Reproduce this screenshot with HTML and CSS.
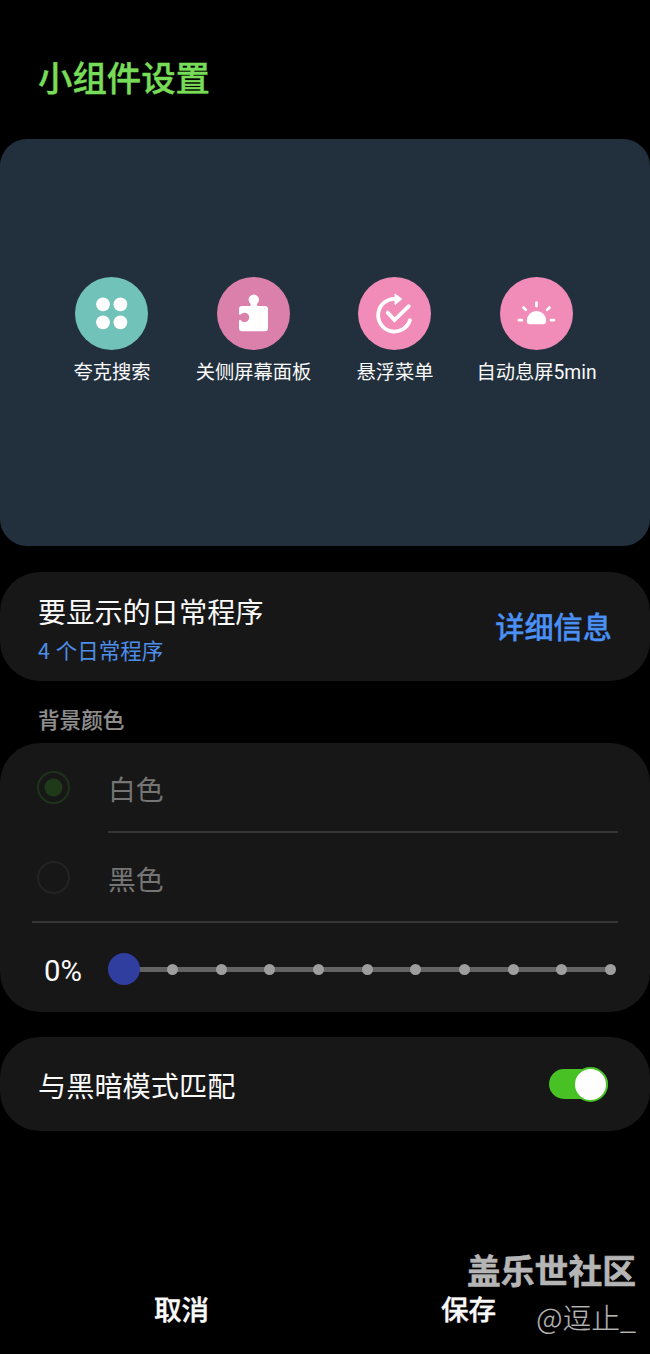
FILE: index.html
```html
<!DOCTYPE html>
<html lang="zh-CN">
<head>
<meta charset="UTF-8">
<meta name="viewport" content="width=device-width, initial-scale=1.0">
<title>小组件设置</title>
<link rel="stylesheet" href="styles.css">
</head>
<body>
<div class="screen">
  <h1>小组件设置</h1>

  <div class="preview">
    <div class="routine">
      <svg class="icon teal" viewBox="0 0 73 73">
        <circle cx="28" cy="27.3" r="6.9"/>
        <circle cx="45.4" cy="27.3" r="6.9"/>
        <circle cx="28" cy="45.3" r="6.9"/>
        <circle cx="45.4" cy="45.3" r="6.9"/>
      </svg>
      <span>夸克搜索</span>
    </div>
    <div class="routine">
      <svg class="icon rose" viewBox="0 0 73 73">
        <path d="M25 29h6.500c1.800 0 2.600-.6 2.100-2.100a5.200 5.200 0 1 1 6.400 0c-.5 1.500.3 2.100 2.100 2.100H48a3 3 0 0 1 3 3v19.300a3 3 0 0 1-3 3H25a3 3 0 0 1-3-3v-7c0-1.300.9-1.500 2-.8a4.700 4.700 0 1 0 0-6.200c-1.100.8-2 .4-2-.8V32a3 3 0 0 1 3-3z"/>
      </svg>
      <span>关侧屏幕面板</span>
    </div>
    <div class="routine">
      <svg class="icon pink" viewBox="0 0 73 73">
        <path class="line" d="M38 22A16.300 16.300 0 1 0 52 43.200M29.700 35.600l6.800 7.400L50.800 29.200"/>
        <path d="M37 17l6.700 5-6.700 5.500z" stroke="#fff" stroke-linejoin="round"/>
      </svg>
      <span>悬浮菜单</span>
    </div>
    <div class="routine">
      <svg class="icon pink" viewBox="0 0 73 73">
        <path d="M26.800 43.700a9.700 9.700 0 0 1 19.400 0c0 2.400-1 3.600-3.200 3.600H30c-2.200 0-3.200-1.200-3.200-3.600z"/>
        <path class="ray" d="M36.500 25.500v3.600M23.500 30.500l2.400 2.400M49.500 30.500l-2.400 2.400M18.900 43.200h3M51 43.200h3"/>
      </svg>
      <span>自动息屏5min</span>
    </div>
  </div>

  <div class="card routines">
    <div>
      <div class="title">要显示的日常程序</div>
      <div class="count">4 个日常程序</div>
    </div>
    <a class="details">详细信息</a>
  </div>

  <h2>背景颜色</h2>

  <div class="card colors">
    <div class="option">
      <span class="radio checked"></span>
      <span class="name">白色</span>
    </div>
    <div class="option last">
      <span class="radio"></span>
      <span class="name">黑色</span>
    </div>
    <div class="opacity">
      <span class="percent">0%</span>
      <div class="slider">
        <span class="knob"></span>
        <i></i><i></i><i></i><i></i><i></i><i></i><i></i><i></i><i></i><i></i>
      </div>
    </div>
  </div>

  <div class="card dark-mode">
    <span class="title">与黑暗模式匹配</span>
    <span class="switch"><span class="thumb"></span></span>
  </div>

  <div class="buttons">
    <span>取消</span>
    <span>保存</span>
  </div>

  <div class="watermark">
    <div class="community">盖乐世社区</div>
    <div class="user">@逗止_</div>
  </div>
</div>
</body>
</html>
```

FILE: styles.css
```css
* {
    box-sizing: border-box;
}

body {
    margin: 0;
    background-color: #000;
    color: #fafafa;
    font-family: Roboto, "Noto Sans CJK SC", sans-serif;
}

.screen {
    position: relative;
    width: 650px;
    height: 1354px;
    overflow: hidden;
}

h1 {
    margin: 0;
    height: 139px;
    padding: 54px 38px 0;
    font-size: 34.400px;
    font-weight: 500;
    line-height: 50px;
    color: #77dc58;
    -webkit-text-stroke: 0.4px;
}

.preview {
    display: grid;
    grid-template-columns: repeat(4, 141.500px);
    justify-content: center;
    height: 407px;
    padding-top: 138px;
    padding-right: 2.500px;
    border-radius: 27px;
    background-color: #22303d;
}

.routine {
    display: flex;
    flex-direction: column;
    align-items: center;
    font-size: 19.300px;
    line-height: 28px;
    white-space: nowrap;
}

.routine span {
    margin-top: 9px;
    padding-left: 1px;
}

.icon {
    width: 73px;
    height: 73px;
    border-radius: 50%;
    fill: #fff;
}

.teal {
    background-color: #71c2b8;
}

.rose {
    background-color: #da80ab;
}

.pink {
    background-color: #f18bb8;
}

.line {
    fill: none;
    stroke: #fff;
    stroke-width: 3.800;
    stroke-linecap: round;
}

.ray {
    fill: none;
    stroke: #fff;
    stroke-width: 2.700;
    stroke-linecap: round;
}

.card {
    border-radius: 40px;
    background-color: #171717;
}

.title {
    font-size: 28.200px;
    line-height: 40px;
}

.routines {
    display: flex;
    justify-content: space-between;
    height: 109px;
    margin-top: 26px;
    padding: 22px 38px 0;
}

.count {
    font-family: "Noto Sans CJK SC", sans-serif;
    font-size: 21.500px;
    line-height: 31px;
    word-spacing: 1px;
    color: #4d8ee8;
}

.details {
    font-size: 29.200px;
    font-weight: 500;
    line-height: 68px;
    color: #4a90f5;
    -webkit-text-stroke: 0.3px;
}

h2 {
    margin: 0;
    height: 62px;
    padding: 25px 38px 0;
    font-size: 21.600px;
    font-weight: 500;
    line-height: 30px;
    color: #8e8e8e;
    -webkit-text-stroke: 0.2px;
}

.colors {
    height: 269px;
    padding: 0 32px;
}

.option {
    display: grid;
    grid-template-columns: 76px 1fr;
    height: 90px;
}

.option .name {
    padding-top: 7px;
    border-bottom: 2px solid #363636;
    font-size: 27.800px;
    line-height: 81px;
    color: #757575;
}

.last {
    border-bottom: 2px solid #363636;
}

.last .name {
    border: none;
}

.radio {
    width: 33px;
    height: 33px;
    margin: 28px 0 0 5px;
    border: 2px solid #232323;
    border-radius: 50%;
}

.checked {
    border-color: #1e331b;
    background: radial-gradient(circle, #1e3a18 8.500px, transparent 9.300px);
}

.opacity {
    display: flex;
    align-items: center;
    height: 92px;
}

.percent {
    width: 76px;
    padding: 3px 0 0 12px;
    font-size: 29.300px;
}

.slider {
    display: flex;
    align-items: center;
    justify-content: space-between;
    width: 508px;
    height: 32px;
    background: linear-gradient(#636363, #636363) 16px 50% / 486px 5px no-repeat;
}

.slider i {
    width: 11px;
    height: 11px;
    border-radius: 50%;
    background-color: #9e9e9e;
}

.knob {
    width: 32px;
    height: 32px;
    margin-right: -10.500px;
    border-radius: 50%;
    background-color: #303f9f;
}

.dark-mode {
    display: flex;
    align-items: center;
    justify-content: space-between;
    height: 94px;
    margin-top: 25px;
    padding: 0 42px 0 38px;
}

.dark-mode .title {
    padding-top: 8px;
}

.switch {
    display: flex;
    align-items: center;
    justify-content: flex-end;
    width: 59px;
    height: 30px;
    border-radius: 15px;
    background-color: #47c124;
}

.thumb {
    width: 35px;
    height: 35px;
    flex: none;
    border: 2px solid #47c124;
    border-radius: 50%;
    background-color: #fefefe;
}

.buttons {
    display: grid;
    grid-template-columns: 287px 287px;
    justify-content: center;
    margin-top: 160px;
    text-align: center;
    font-size: 27.600px;
    font-weight: 500;
    line-height: 40px;
    -webkit-text-stroke: 0.4px;
}

/* sits on top of the bottom buttons */
.watermark {
    position: absolute;
    right: 14px;
    bottom: 19px;
    text-align: right;
    color: #b5b5b5;
}

.community {
    font-size: 33.800px;
    font-weight: 700;
    line-height: 50px;
    -webkit-text-stroke: 0.6px;
}

.user {
    font-family: "Noto Sans CJK SC", sans-serif;
    font-size: 28.800px;
    font-weight: 300;
    line-height: 37px;
    -webkit-text-stroke: 0.2px;
}
```
